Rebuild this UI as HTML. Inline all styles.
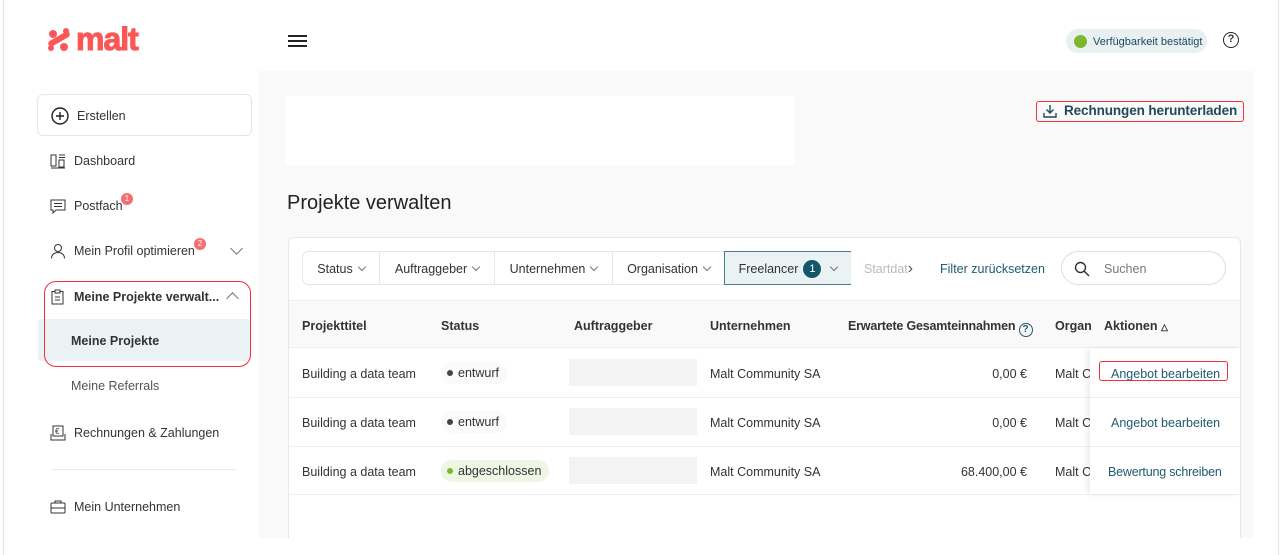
<!DOCTYPE html>
<html><head><meta charset="utf-8"><style>
*{box-sizing:border-box;margin:0;padding:0}
body{width:1280px;height:555px;background:#fff;font-family:"Liberation Sans",sans-serif;color:#333;position:relative;overflow:hidden;font-size:13px}
.abs{position:absolute}
.nav{position:absolute;left:50px;display:flex;align-items:center;font-size:12.5px;color:#333;margin-top:1px}
.nav svg{margin-right:8px}
.pill{position:absolute;top:251px;height:34px;display:flex;align-items:center;justify-content:center;font-size:12.5px;color:#333;border:1px solid #e6e6e6;background:#fff;padding-top:1px}
.chev{display:inline-block;width:6px;height:6px;border-right:1px solid #777;border-bottom:1px solid #777;transform:rotate(45deg);margin-left:6px;margin-top:-4px}
.th{position:absolute;top:319px;font-size:12.5px;font-weight:bold;color:#333}
.td{position:absolute;font-size:12.5px;color:#333;margin-top:1px}
.row{position:absolute;left:289px;width:951px;height:1px;background:#eef0f3}
</style></head><body>
<div class="abs" style="left:3px;top:0;width:1px;height:555px;background:#e4e4e4"></div>
<div class="abs" style="left:1278px;top:0;width:1px;height:555px;background:#e4e4e4"></div>
<!-- logo -->
<svg class="abs" style="left:46px;top:26px" width="110" height="28" viewBox="0 0 110 28">
<g fill="#fc5757"><circle cx="7" cy="8" r="4"/><circle cx="18" cy="21" r="4"/><rect x="1" y="10" width="24" height="6" rx="3" transform="rotate(-30 13 13)"/><circle cx="20" cy="5" r="3"/><circle cx="5" cy="22" r="3"/></g>
<text x="30" y="24" font-family="Liberation Sans" font-weight="bold" font-size="32" letter-spacing="-1" fill="#fc5757" stroke="#fc5757" stroke-width="1">malt</text></svg>
<div class="abs" style="left:288px;top:35px;width:19px;height:2px;background:#222;box-shadow:0 5px 0 #222,0 10px 0 #222"></div>
<div class="abs" style="left:1066px;top:29px;width:141px;height:24px;border-radius:12px;background:#e8f0f2;font-size:11px;color:#1e4a5a;display:flex;align-items:center;padding-top:1px"><span style="width:13px;height:13px;border-radius:50%;background:#7cb82f;margin:0 6px 0 8px"></span>Verfügbarkeit bestätigt</div>
<div class="abs" style="left:1223px;top:32px;width:16px;height:16px;border:1.5px solid #222;border-radius:50%;font-size:11px;font-weight:bold;text-align:center;line-height:13px">?</div>
<!-- content bg -->
<div class="abs" style="left:259px;top:71px;width:994px;height:467px;background:#f9f9f9"></div>
<!-- sidebar -->
<div class="abs" style="left:37px;top:94px;width:215px;height:42px;border:1px solid #e6e6e6;border-radius:6px;background:#fff"></div>
<div class="nav" style="top:106px;left:51px"><svg width="18" height="18"><circle cx="9" cy="9" r="8" fill="none" stroke="#222" stroke-width="1.4"/><path d="M9 5v8M5 9h8" stroke="#222" stroke-width="1.4"/></svg>Erstellen</div>
<div class="nav" style="top:152px"><svg width="16" height="16"><rect x="1" y="2" width="5" height="11" fill="none" stroke="#333"/><rect x="9" y="7" width="5" height="7" fill="none" stroke="#333"/><path d="M9 2h6M9 4.5h6M1 15h14" stroke="#333"/></svg>Dashboard</div>
<div class="nav" style="top:197px"><svg width="16" height="16"><path d="M1 2h14v10H6l-3 3v-3H1z" fill="none" stroke="#333"/><path d="M4 5.5h8M4 8.5h8" stroke="#333"/></svg>Postfach</div>
<div class="abs" style="left:121px;top:193px;width:12px;height:12px;border-radius:50%;background:#f76e6e;color:#fff;font-size:8px;text-align:center;line-height:12px">1</div>
<div class="nav" style="top:242px"><svg width="16" height="16"><circle cx="8" cy="5" r="3.5" fill="none" stroke="#333"/><path d="M1.5 15.5c0-4 3-6 6.5-6s6.5 2 6.5 6" fill="none" stroke="#333"/></svg>Mein Profil optimieren</div>
<div class="abs" style="left:194px;top:238px;width:12px;height:12px;border-radius:50%;background:#f76e6e;color:#fff;font-size:8px;text-align:center;line-height:12px">2</div>
<div class="chev abs" style="left:226px;top:248px;width:9px;height:9px"></div>
<div class="abs" style="left:38px;top:319px;width:212px;height:42px;background:#ebf2f3;border-radius:4px"></div>
<div class="abs" style="left:44px;top:281px;width:207px;height:86px;border:1px solid #f0303a;border-radius:12px"></div>
<div class="nav" style="top:288px;font-weight:bold"><svg width="16" height="16"><rect x="2" y="2.5" width="11" height="12.5" fill="none" stroke="#333"/><rect x="5" y="1" width="5" height="3" fill="#fff" stroke="#333"/><path d="M5 8h5M5 11h5" stroke="#333"/></svg>Meine Projekte verwalt...</div>
<div class="abs" style="left:228px;top:294px;width:9px;height:9px;border-left:1px solid #777;border-top:1px solid #777;transform:rotate(45deg)"></div>
<div class="td" style="left:71px;top:333px;font-weight:bold">Meine Projekte</div>
<div class="td" style="left:71px;top:378px;color:#555">Meine Referrals</div>
<div class="nav" style="top:424px"><svg width="16" height="16"><rect x="3" y="1" width="10" height="10" fill="none" stroke="#333"/><path d="M1 9v6h14V9" fill="none" stroke="#333"/><text x="5" y="9" font-size="8" fill="#333">€</text></svg>Rechnungen &amp; Zahlungen</div>
<div class="abs" style="left:52px;top:469px;width:184px;height:1px;background:#e8e8e8"></div>
<div class="nav" style="top:498px"><svg width="16" height="16"><rect x="1" y="4" width="14" height="10" rx="1" fill="none" stroke="#333"/><path d="M5 4V2h6v2M1 9h14" fill="none" stroke="#333"/></svg>Mein Unternehmen</div>
<!-- main -->
<div class="abs" style="left:285px;top:96px;width:510px;height:69px;background:#fff"></div>
<div class="abs" style="left:1036px;top:101px;width:208px;height:21px;border:1px solid #f0303a;border-radius:3px"></div>
<div class="abs" style="left:1043px;top:103px;font-size:13.5px;font-weight:bold;color:#1e4a5a;display:flex;align-items:center;letter-spacing:-0.1px"><svg width="14" height="14" style="margin-right:7px"><path d="M7 1v8M3.5 5.5 7 9l3.5-3.5M1 9v4h12V9" fill="none" stroke="#1e4a5a" stroke-width="1.4"/></svg>Rechnungen herunterladen</div>
<div class="abs" style="left:287px;top:192px;font-size:20px;color:#222">Projekte verwalten</div>
<div class="abs" style="left:288px;top:237px;width:953px;height:301px;background:#fff;border:1px solid #e8e8e8;border-bottom:none;border-radius:6px 6px 0 0"></div>
<div class="pill" style="left:302px;width:78px;border-radius:6px 0 0 6px">Status<span class="chev"></span></div>
<div class="pill" style="left:379px;width:116px">Auftraggeber<span class="chev"></span></div>
<div class="pill" style="left:494px;width:119px">Unternehmen<span class="chev"></span></div>
<div class="pill" style="left:612px;width:113px">Organisation<span class="chev"></span></div>
<div class="pill" style="left:724px;width:128px;background:#ebf2f3;border-color:#4a7a8a">Freelancer<span style="width:18px;height:18px;border-radius:50%;background:#14576b;color:#fff;font-size:11px;text-align:center;line-height:18px;margin-left:5px">1</span><span class="chev" style="margin-left:10px"></span></div>
<div class="pill" style="left:851px;width:70px;color:#bbb;border:none;justify-content:flex-start;padding-left:13px;overflow:hidden">Startdat<span style="color:#555;font-size:16px">›</span></div>
<div class="td" style="left:940px;top:261px;color:#1e5a70">Filter zurücksetzen</div>
<div class="abs" style="left:1061px;top:251px;width:165px;height:34px;border:1.5px solid #ddd;border-radius:17px;display:flex;align-items:center;font-size:12.5px;color:#777;padding-top:1px"><svg width="16" height="16" style="margin:0 14px 0 12px"><circle cx="6.5" cy="6.5" r="5" fill="none" stroke="#333" stroke-width="1.4"/><path d="M10 10l5 5" stroke="#333" stroke-width="1.4"/></svg>Suchen</div>
<div class="abs" style="left:289px;top:300px;width:951px;height:48px;background:#f9f9f9;border-top:1px solid #eee;border-bottom:1px solid #eee"></div>
<div class="th" style="left:302px">Projekttitel</div>
<div class="th" style="left:441px">Status</div>
<div class="th" style="left:574px">Auftraggeber</div>
<div class="th" style="left:710px">Unternehmen</div>
<div class="th" style="left:848px;letter-spacing:-0.2px">Erwartete Gesamteinnahmen <span style="display:inline-block;width:14px;height:14px;border:1.3px solid #1e5a70;border-radius:50%;color:#1e5a70;font-size:10px;text-align:center;line-height:12px;vertical-align:-2px;letter-spacing:0">?</span></div>
<div class="th" style="left:1055px">Organ</div>
<div class="row" style="top:397px"></div><div class="row" style="top:446px"></div><div class="row" style="top:494px"></div>
<!-- rows -->
<div class="td" style="left:302px;top:366px">Building a data team</div>
<div class="td" style="left:302px;top:415px">Building a data team</div>
<div class="td" style="left:302px;top:464px">Building a data team</div>
<div class="td" style="left:441px;top:361px;height:22px;padding:0 8px 0 6px;border-radius:11px;background:#fafafa;line-height:22px"><span style="display:inline-block;width:6px;height:6px;border-radius:50%;background:#444;margin-right:5px;vertical-align:1px"></span>entwurf</div>
<div class="td" style="left:441px;top:410px;height:22px;padding:0 8px 0 6px;border-radius:11px;background:#fafafa;line-height:22px"><span style="display:inline-block;width:6px;height:6px;border-radius:50%;background:#444;margin-right:5px;vertical-align:1px"></span>entwurf</div>
<div class="td" style="left:441px;top:459px;height:22px;padding:0 8px 0 6px;border-radius:11px;background:#eef6e4;line-height:22px"><span style="display:inline-block;width:6px;height:6px;border-radius:50%;background:#7cb82f;margin-right:5px;vertical-align:1px"></span>abgeschlossen</div>
<div class="abs" style="left:569px;top:359px;width:128px;height:27px;background:#f3f3f3"></div>
<div class="abs" style="left:569px;top:408px;width:128px;height:27px;background:#f3f3f3"></div>
<div class="abs" style="left:569px;top:457px;width:128px;height:27px;background:#f3f3f3"></div>
<div class="td" style="left:710px;top:366px">Malt Community SA</div>
<div class="td" style="left:710px;top:415px">Malt Community SA</div>
<div class="td" style="left:710px;top:464px">Malt Community SA</div>
<div class="td" style="left:927px;width:100px;text-align:right;top:366px">0,00 €</div>
<div class="td" style="left:927px;width:100px;text-align:right;top:415px">0,00 €</div>
<div class="td" style="left:927px;width:100px;text-align:right;top:464px">68.400,00 €</div>
<div class="td" style="left:1055px;top:366px">Malt C</div>
<div class="td" style="left:1055px;top:415px">Malt C</div>
<div class="td" style="left:1055px;top:464px">Malt C</div>
<div class="abs" style="left:1090px;top:349px;width:150px;height:145px;background:#fff;box-shadow:-3px 0 5px rgba(0,0,0,.07)"></div>
<div class="abs" style="left:1090px;top:397px;width:150px;height:1px;background:#eef0f3"></div>
<div class="abs" style="left:1090px;top:446px;width:150px;height:1px;background:#eef0f3"></div>
<div class="th" style="left:1104px">Aktionen <span style="font-size:9px">△</span></div>
<div class="abs" style="left:1099px;top:361px;width:129px;height:20px;border:1px solid #f0303a;border-radius:3px"></div>
<div class="td" style="left:1111px;top:366px;color:#1e5a70">Angebot bearbeiten</div>
<div class="td" style="left:1111px;top:415px;color:#1e5a70">Angebot bearbeiten</div>
<div class="td" style="left:1108px;top:464px;color:#1e5a70;letter-spacing:-0.2px">Bewertung schreiben</div>
</body></html>
